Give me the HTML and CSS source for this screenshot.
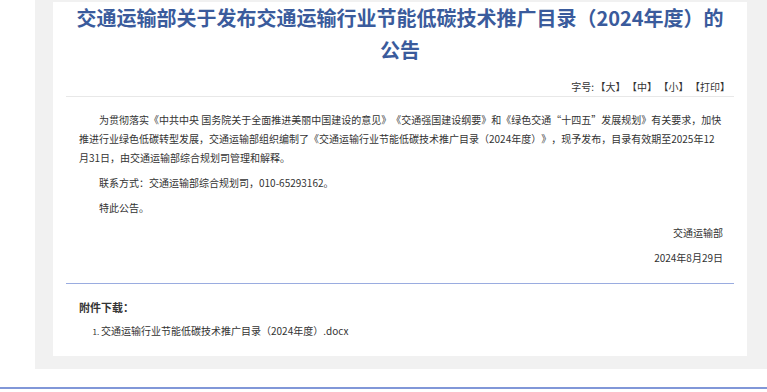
FILE: index.html
```html
<!DOCTYPE html>
<html lang="zh-CN">
	<head>
		<meta charset="utf-8">
		<title>交通运输部关于发布交通运输行业节能低碳技术推广目录（2024年度）的公告</title>
		<link rel="stylesheet" href="styles.css">
	</head>
	<body>
	<div class="panel">
		<div class="article">
			<h1 class="title">交通运输部关于发布交通运输行业节能低碳技术推广目录（2024年度）的公告</h1>
			<div class="tools">字号:<span>【大】</span><span>【中】</span><span>【小】</span><span>【打印】</span></div>
			<div class="content">
				<p class="indent">为贯彻落实《中共中央 国务院关于全面推进美丽中国建设的意见》《交通强国建设纲要》和《绿色交通“十四五”发展规划》有关要求，加快推进行业绿色低碳转型发展，交通运输部组织编制了《交通运输行业节能低碳技术推广目录（2024年度）》，现予发布，目录有效期至2025年12月31日，由交通运输部综合规划司管理和解释。</p>
				<p class="indent">联系方式：交通运输部综合规划司，010-65293162。</p>
				<p class="indent">特此公告。</p>
				<p class="sign">交通运输部</p>
				<p class="sign">2024年8月29日</p>
			</div>
			<div class="attach">
				<h3>附件下载：</h3>
				<ol>
					<li>交通运输行业节能低碳技术推广目录（2024年度）.docx</li>
				</ol>
			</div>
		</div>
	</div>
	<div class="footer"></div>
	</body>
</html>
```

FILE: styles.css
```css
body{margin:0; background:#fff; font-family:"Noto Sans CJK SC", "Liberation Sans", sans-serif; color:#333; text-spacing-trim:space-all;}
.panel{margin-left:35px; padding:2px 20px 13px 18px; background:#f1f1f1;}
.article{background:#fff; padding:0 13px 16px 13px;}
.title
{
	margin:0 auto;
	width:652px;
	text-align:center;
	font-size:20px;
	line-height:32px;
	font-weight:bold;
	color:#3a5b9c;
}
.tools
{
	margin-top:11px;
	padding-right:4px;
	text-align:right;
	font-size:10px;
	line-height:19px;
	border-bottom:1px solid #e8e8e8;
}
.tools>span{margin-left:1.5px;}
.content{padding:13px 11px 10px 13px; font-size:10px; line-height:19px;}
.content p{margin:0 0 6px 0;}
.indent{text-indent:2em;}
.sign{text-align:right;}
.attach{border-top:1px solid #9aace0; padding:14px 0 0 13px;}
.attach h3{margin:0; font-size:11px; line-height:19px; font-weight:bold;}
.attach ol{margin:4px 0 0 0; padding-left:22px; font-size:10px; line-height:19px;}
.attach li::marker{font-size:8px;}
.footer{margin-top:18px; border-top:2px solid #8197d8; height:10px;}
```
